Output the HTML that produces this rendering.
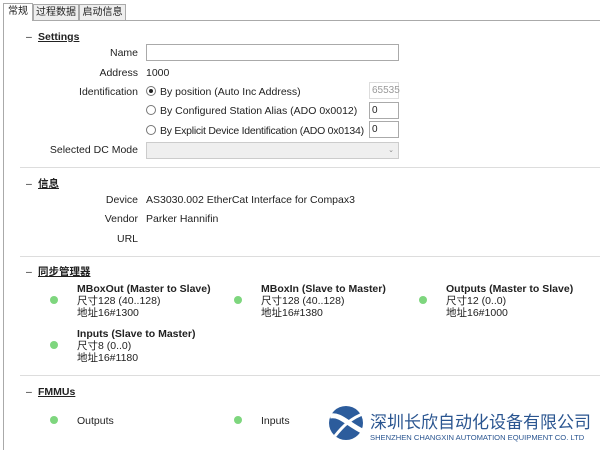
<!DOCTYPE html>
<html><head><meta charset="utf-8"><style>
*{margin:0;padding:0;box-sizing:border-box}
body{width:600px;height:450px;background:#fff;font-family:"Liberation Sans","Noto Sans CJK SC",sans-serif;font-size:10.5px;color:#222;position:relative;overflow:hidden}
.a{position:absolute;white-space:nowrap;line-height:12px}
.r{text-align:right;width:130px;left:8px}
.h{font-weight:bold;text-decoration:underline}
.b{font-weight:bold}
.dot{position:absolute;width:8px;height:8px;border-radius:50%;background:#7ed67e}
.sep{position:absolute;left:20px;right:0;height:1px;background:#ddd}
.in{position:absolute;border:1px solid #aaa;background:#fff;height:17px;font-size:10px;padding-left:2px;line-height:15px}
.rad{position:absolute;width:10px;height:10px;border:1px solid #777;border-radius:50%;background:#fff}
.tab{position:absolute;top:4px;height:17px;border:1px solid #aaa;background:#eee;line-height:15px;text-align:center;font-size:10px}
</style></head><body>
<div style="position:absolute;left:3px;top:20px;width:1px;height:430px;background:#aaa"></div>
<div style="position:absolute;left:3px;top:20px;right:0;height:1px;background:#aaa"></div>
<div class="tab" style="left:3px;width:30px;top:3px;height:18px;background:#fff;border-bottom:none">常规</div>
<div class="tab" style="left:33px;width:46px">过程数据</div>
<div class="tab" style="left:79px;width:47px">启动信息</div>

<div class="a" style="left:26px;top:31px">–</div><div class="a h" style="left:38px;top:31px">Settings</div>
<div class="a r" style="top:47px">Name</div>
<div class="in" style="left:146px;top:44px;width:253px"></div>
<div class="a r" style="top:67px">Address</div><div class="a" style="left:146px;top:67px">1000</div>
<div class="a r" style="top:86px">Identification</div>
<div class="rad" style="left:146px;top:86px"><div style="width:4px;height:4px;background:#222;border-radius:50%;margin:2px"></div></div>
<div class="a" style="left:160px;top:86px">By position (Auto Inc Address)</div>
<div class="in" style="left:369px;top:82px;width:30px;border-color:#ddd;color:#999">65535</div>
<div class="rad" style="left:146px;top:105px"></div>
<div class="a" style="left:160px;top:105px">By Configured Station Alias (ADO 0x0012)</div>
<div class="in" style="left:369px;top:102px;width:30px">0</div>
<div class="rad" style="left:146px;top:125px"></div>
<div class="a" style="left:160px;top:125px;letter-spacing:-0.25px">By Explicit Device Identification (ADO 0x0134)</div>
<div class="in" style="left:369px;top:121px;width:30px">0</div>
<div class="a r" style="top:144px">Selected DC Mode</div>
<div class="in" style="left:146px;top:142px;width:253px;background:#efefef;border-color:#ccc"><span style="position:absolute;right:4px;top:0;font-size:7px;color:#888">⌄</span></div>
<div class="sep" style="top:167px"></div>

<div class="a" style="left:26px;top:178px">–</div><div class="a h" style="left:38px;top:178px">信息</div>
<div class="a r" style="top:194px">Device</div><div class="a" style="left:146px;top:194px">AS3030.002 EtherCat Interface for Compax3</div>
<div class="a r" style="top:213px">Vendor</div><div class="a" style="left:146px;top:213px">Parker Hannifin</div>
<div class="a r" style="top:233px">URL</div>
<div class="sep" style="top:256px"></div>

<div class="a" style="left:26px;top:266px">–</div><div class="a h" style="left:38px;top:266px">同步管理器</div>
<div class="dot" style="left:50px;top:296px"></div>
<div class="a" style="left:77px;top:283px"><span class="b">MBoxOut (Master to Slave)</span><br>尺寸128 (40..128)<br>地址16#1300</div>
<div class="dot" style="left:234px;top:296px"></div>
<div class="a" style="left:261px;top:283px"><span class="b">MBoxIn (Slave to Master)</span><br>尺寸128 (40..128)<br>地址16#1380</div>
<div class="dot" style="left:419px;top:296px"></div>
<div class="a" style="left:446px;top:283px"><span class="b">Outputs (Master to Slave)</span><br>尺寸12 (0..0)<br>地址16#1000</div>
<div class="dot" style="left:50px;top:341px"></div>
<div class="a" style="left:77px;top:328px"><span class="b">Inputs (Slave to Master)</span><br>尺寸8 (0..0)<br>地址16#1180</div>
<div class="sep" style="top:375px"></div>

<div class="a" style="left:26px;top:386px">–</div><div class="a h" style="left:38px;top:386px">FMMUs</div>
<div class="dot" style="left:50px;top:416px"></div><div class="a" style="left:77px;top:415px">Outputs</div>
<div class="dot" style="left:234px;top:416px"></div><div class="a" style="left:261px;top:415px">Inputs</div>

<svg style="position:absolute;left:327px;top:404px" width="40" height="38" viewBox="0 0 40 38">
<circle cx="19" cy="19" r="17" fill="#2c5c9c"/>
<path d="M3 12 C14 10 20 20 37 28" stroke="#fff" stroke-width="5" fill="none"/>
<path d="M8 32 C16 22 24 14 38 9" stroke="#fff" stroke-width="3" fill="none"/>
</svg>
<div class="a" style="left:370px;top:410px;font-size:17px;line-height:22px;color:#2a5590;font-family:'Noto Sans CJK SC',sans-serif">深圳长欣自动化设备有限公司</div>
<div class="a" style="left:370px;top:433px;font-size:7.6px;line-height:9px;color:#2a5590">SHENZHEN CHANGXIN AUTOMATION EQUIPMENT CO. LTD</div>
</body></html>
